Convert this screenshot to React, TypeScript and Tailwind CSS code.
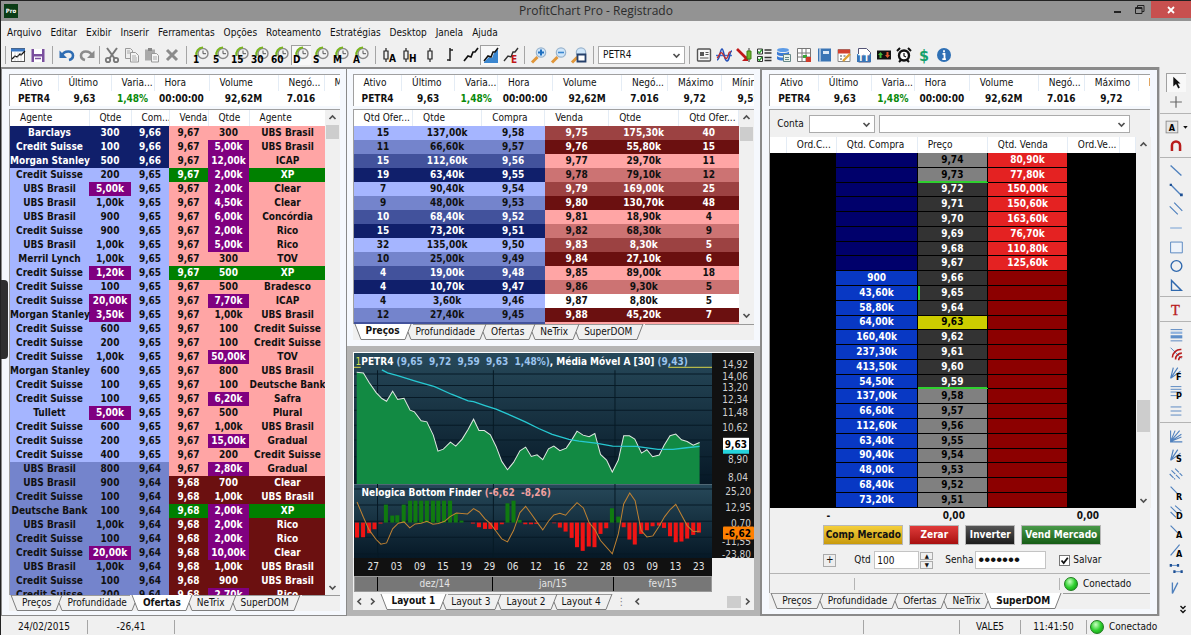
import type { ReactNode } from "react";
import { clsx } from "clsx";

const menuItems = ["Arquivo", "Editar", "Exibir", "Inserir", "Ferramentas", "Opções", "Roteamento", "Estratégias", "Desktop", "Janela", "Ajuda"];

const panelTabs = ["Preços", "Profundidade", "Ofertas", "NeTrix", "SuperDOM"];

const quote = [
    { label: "Ativo", value: "PETR4", width: "w-12" },
    { label: "Último", value: "9,63", width: "w-[53px]" },
    { label: "Varia...", value: "1,48%", width: "w-[43px]" },
    { label: "Hora", value: "00:00:00", width: "w-[55px]" },
    { label: "Volume", value: "92,62M", width: "w-[69px]" },
    { label: "Negó...", value: "7.016", width: "w-[46px]" },
    { label: "Máximo", value: "9,72", width: "w-[54px]" },
    { label: "Mínimo", value: "9,59", width: "w-[54px]" },
];

// buyer, qty, bid, ask, qty, seller
const offers = [
    ["Barclays", "300", "9,66", "9,67", "300", "UBS Brasil"],
    ["Credit Suisse", "100", "9,66", "9,67", "5,00k", "UBS Brasil"],
    ["Morgan Stanley", "500", "9,66", "9,67", "12,00k", "ICAP"],
    ["Credit Suisse", "200", "9,65", "9,67", "2,00k", "XP"],
    ["UBS Brasil", "5,00k", "9,65", "9,67", "2,00k", "Clear"],
    ["UBS Brasil", "1,00k", "9,65", "9,67", "4,50k", "Clear"],
    ["UBS Brasil", "900", "9,65", "9,67", "6,00k", "Concórdia"],
    ["Credit Suisse", "900", "9,65", "9,67", "2,00k", "Rico"],
    ["UBS Brasil", "1,00k", "9,65", "9,67", "5,00k", "Rico"],
    ["Merril Lynch", "1,00k", "9,65", "9,67", "300", "TOV"],
    ["Credit Suisse", "1,20k", "9,65", "9,67", "500", "XP"],
    ["Credit Suisse", "100", "9,65", "9,67", "500", "Bradesco"],
    ["Credit Suisse", "20,00k", "9,65", "9,67", "7,70k", "ICAP"],
    ["Morgan Stanley", "3,50k", "9,65", "9,67", "1,00k", "UBS Brasil"],
    ["Credit Suisse", "600", "9,65", "9,67", "100", "Credit Suisse"],
    ["Credit Suisse", "200", "9,65", "9,67", "100", "Credit Suisse"],
    ["Credit Suisse", "1,00k", "9,65", "9,67", "50,00k", "TOV"],
    ["Morgan Stanley", "600", "9,65", "9,67", "800", "UBS Brasil"],
    ["Credit Suisse", "100", "9,65", "9,67", "100", "Deutsche Bank"],
    ["Credit Suisse", "100", "9,65", "9,67", "6,20k", "Safra"],
    ["Tullett", "5,00k", "9,65", "9,67", "500", "Plural"],
    ["Credit Suisse", "600", "9,65", "9,67", "1,00k", "UBS Brasil"],
    ["Credit Suisse", "200", "9,65", "9,67", "15,00k", "Gradual"],
    ["Credit Suisse", "400", "9,65", "9,67", "200", "Credit Suisse"],
    ["UBS Brasil", "800", "9,64", "9,67", "2,80k", "Gradual"],
    ["UBS Brasil", "900", "9,64", "9,68", "700", "Clear"],
    ["Credit Suisse", "100", "9,64", "9,68", "1,00k", "UBS Brasil"],
    ["Deutsche Bank", "100", "9,64", "9,68", "2,00k", "XP"],
    ["UBS Brasil", "1,00k", "9,64", "9,68", "2,00k", "Rico"],
    ["Credit Suisse", "100", "9,64", "9,68", "2,00k", "Rico"],
    ["Credit Suisse", "20,00k", "9,64", "9,68", "10,00k", "Clear"],
    ["UBS Brasil", "1,00k", "9,64", "9,68", "1,00k", "UBS Brasil"],
    ["Credit Suisse", "100", "9,64", "9,68", "900", "UBS Brasil"],
    ["Credit Suisse", "200", "9,64", "9,68", "2,70k", "Rico"],
];

const prices = [
    ["15", "137,00k", "9,58", "9,75", "175,30k", "40"],
    ["11", "66,60k", "9,57", "9,76", "55,80k", "15"],
    ["15", "112,60k", "9,56", "9,77", "29,70k", "11"],
    ["19", "63,40k", "9,55", "9,78", "79,10k", "12"],
    ["7", "90,40k", "9,54", "9,79", "169,00k", "25"],
    ["9", "48,00k", "9,53", "9,80", "130,70k", "48"],
    ["10", "68,40k", "9,52", "9,81", "18,90k", "4"],
    ["15", "73,20k", "9,51", "9,82", "68,30k", "9"],
    ["32", "135,00k", "9,50", "9,83", "8,30k", "5"],
    ["10", "25,00k", "9,49", "9,84", "27,10k", "6"],
    ["4", "19,00k", "9,48", "9,85", "89,00k", "18"],
    ["4", "10,70k", "9,47", "9,86", "9,30k", "5"],
    ["4", "3,60k", "9,46", "9,87", "8,80k", "5"],
    ["12", "27,40k", "9,45", "9,88", "45,20k", "7"],
    ["", "", "", "", "", ""],
];

const buyShades = ["bg-[#a5b5ff]", "bg-[#7484cc]", "bg-[#42529c] text-white", "bg-[#101f6b] text-white"];
const sellShades = ["bg-[#9c4242] text-white", "bg-[#6b1010] text-white", "bg-[#ffa5a5]", "bg-[#cc7373]"];

// qty bought, price, qty sold
const ladder = [
    ["", "9,74", "80,90k"],
    ["", "9,73", "77,80k"],
    ["", "9,72", "150,00k"],
    ["", "9,71", "150,60k"],
    ["", "9,70", "163,60k"],
    ["", "9,69", "76,70k"],
    ["", "9,68", "110,80k"],
    ["", "9,67", "125,60k"],
    ["900", "9,66", ""],
    ["43,60k", "9,65", ""],
    ["58,80k", "9,64", ""],
    ["64,00k", "9,63", ""],
    ["160,40k", "9,62", ""],
    ["237,30k", "9,61", ""],
    ["413,50k", "9,60", ""],
    ["54,50k", "9,59", ""],
    ["137,00k", "9,58", ""],
    ["66,60k", "9,57", ""],
    ["112,60k", "9,56", ""],
    ["63,40k", "9,55", ""],
    ["90,40k", "9,54", ""],
    ["48,00k", "9,53", ""],
    ["68,40k", "9,52", ""],
    ["73,20k", "9,51", ""],
];

/* ---------- toolbar icons ---------- */

function Icon({ children, size = 20 }: { children: ReactNode; size?: number }) {
    return (
        <svg width={size} height={size} viewBox="0 0 20 20" fill="none" aria-hidden="true">
            {children}
        </svg>
    );
}

function Letter({ x, y, children, fill = "#000", size = 10 }: { x: number; y: number; children: ReactNode; fill?: string; size?: number }) {
    return (
        <text x={x} y={y} fontSize={size} fontWeight="bold" fill={fill}>
            {children}
        </text>
    );
}

function ClockIcon({ label }: { label: string }) {
    return (
        <Icon>
            <circle cx="12" cy="8.5" r="5" fill="#f2f2f2" stroke="#8a8a8a" strokeWidth="1.4" />
            <path d="M5.5 11A6.6 6.6 0 0 1 12 2.6" stroke="#7ab51d" strokeWidth="2" />
            <path d="M12 5.5v3.2h3" stroke="#555" strokeWidth="1" />
            <Letter x={label.length > 1 ? 0 : 2} y={18}>{label}</Letter>
        </Icon>
    );
}

const candle = <path d="M6 3v3M6 14v3M4 6h4v8H4z" stroke="#222" strokeWidth="1.2" />;
const trend = "M4 16l4-5 3 1 2-5 2 0 3-4";

function Magnifier({ children }: { children?: ReactNode }) {
    return (
        <Icon>
            <path d="M3 17.5l5.5-5.5" stroke="#e0963a" strokeWidth="3" />
            <circle cx="12" cy="7.5" r="4.7" fill="#cfe6fa" stroke="#9ab3cc" strokeWidth="1.2" />
            {children}
        </Icon>
    );
}

const toolGroups: { id: string; after?: string; tools: { name: string; icon: ReactNode; on?: boolean }[] }[] = [
    {
        id: "file",
        tools: [
            {
                name: "Novo gráfico",
                icon: (
                    <Icon>
                        <rect x="3.5" y="3.5" width="13" height="13" fill="#fff" stroke="#555" />
                        <path d="M3 5h14" stroke="#3b78c4" strokeWidth="3" />
                        <path d="M4 14l3-3 2 1 3-3 1 1 4-4" stroke="#111" strokeWidth="1.3" />
                        <path d="M7 7v9M10 7v9M13 7v9" stroke="#bbb" strokeWidth=".5" />
                    </Icon>
                ),
            },
            {
                name: "Salvar",
                icon: (
                    <Icon>
                        <path d="M3.5 4h13v13h-13z" fill="#7a4f9e" />
                        <path d="M6 4h8v5H6zM6 11.5h8V17H6z" fill="#fff" />
                        <path d="M7 13.5h6" stroke="#7a4f9e" strokeWidth="1.5" />
                    </Icon>
                ),
            },
        ],
    },
    {
        id: "history",
        after: "w-[5px]",
        tools: [
            { name: "Desfazer", icon: <Icon><path d="M5 10.5C7 5.5 16 5 16 10.5c0 3-2 4-4 4.5" stroke="#2f6db3" strokeWidth="2.6" /><path d="M2.5 5.5v7.5h7.5z" fill="#2f6db3" /></Icon> },
            { name: "Refazer", icon: <Icon><path d="M15 10.5C13 5.5 4 5 4 10.5c0 3 2 4 4 4.5" stroke="#8b8b8b" strokeWidth="2.6" /><path d="M17.5 5.5v7.5h-7.5z" fill="#8b8b8b" /></Icon> },
        ],
    },
    {
        id: "edit",
        tools: [
            { name: "Recortar", icon: <Icon><path d="M5 3l8 11M15 3L7 14" stroke="#777" strokeWidth="2" /><circle cx="6" cy="15" r="2.2" stroke="#777" strokeWidth="1.8" /><circle cx="14" cy="15" r="2.2" stroke="#777" strokeWidth="1.8" /></Icon> },
            { name: "Copiar", icon: <Icon><path d="M3.5 3.5h5l2 2v8h-7z" fill="#eee" stroke="#999" /><path d="M8.5 7.5h5l3 3v6.5h-8z" fill="#f4f4f4" stroke="#999" /><path d="M10 11h4M10 13h5M10 15h5M5 6h3M5 8h3" stroke="#aaa" /></Icon> },
            { name: "Colar", icon: <Icon><path d="M3 4.5h10v11H3z" fill="#aaa" /><path d="M6 3h4v3H6z" fill="#888" /><path d="M9.5 8.5h5l2 2v6.5h-7z" fill="#f4f4f4" stroke="#999" /><path d="M11 12h4M11 14h4" stroke="#aaa" /></Icon> },
            { name: "Excluir", icon: <Icon><path d="M5 5l10 10M15 5L5 15" stroke="#8b8b8b" strokeWidth="3" /></Icon> },
        ],
    },
    {
        id: "period",
        tools: ["1", "5", "15", "30", "60", "D", "S", "M", "A"].map((p) => ({ name: `Período ${p}`, icon: <ClockIcon label={p} />, on: p === "D" })),
    },
    {
        id: "style",
        tools: [
            { name: "Candle ajustado", icon: <Icon>{candle}<Letter x={9} y={17}>A</Letter></Icon> },
            { name: "Candle Heikin", icon: <Icon>{candle}<Letter x={9} y={17}>H</Letter></Icon> },
            { name: "Candle", icon: <Icon><path d="M10 3v3M10 14v3M8 6h4v8H8z" stroke="#222" strokeWidth="1.2" /></Icon> },
            { name: "Barra", icon: <Icon><path d="M10 3v13M10 5h3M7 15h3" stroke="#222" strokeWidth="1.5" /></Icon> },
            { name: "Linha", icon: <Icon><path d={trend} stroke="#111" strokeWidth="1.7" /></Icon> },
            { name: "Área", on: true, icon: <Icon><path d="M4 17l5-5 3 1 2-5 4-4v14H4z" fill="#3b87d0" /><path d={trend} stroke="#111" strokeWidth="1.5" /></Icon> },
            { name: "Linha E", icon: <Icon><path d={trend} stroke="#333" strokeWidth="1.4" /><Letter x={11} y={18} fill="#c01818">E</Letter></Icon> },
        ],
    },
    {
        id: "zoom",
        tools: [
            { name: "Ampliar", icon: <Magnifier><path d="M12 4.5v6M9 7.5h6" stroke="#1f6fc0" strokeWidth="2" /></Magnifier> },
            { name: "Reduzir", icon: <Magnifier><path d="M9 7.5h6" stroke="#3b87d0" strokeWidth="1.6" /></Magnifier> },
            { name: "Zoom da área", icon: <Magnifier><path d="M8.5 9.5h8v7h-8z" fill="#fff" stroke="#26406b" strokeWidth="1.8" /></Magnifier> },
        ],
    },
];

const windowTools: { name: string; icon: ReactNode }[] = [
    { name: "Notícias", icon: <Icon><rect x="3.5" y="4" width="13" height="12" rx="1" fill="#f6f6f6" stroke="#555" strokeWidth="1.4" /><path d="M6 7h4v4H6z" fill="#555" /><path d="M11.5 7.5h3M11.5 9.5h3M6 13h8.5" stroke="#555" /></Icon> },
    { name: "Indicadores", icon: <Icon><path d="M2 10.5h16" stroke="#3b6fd0" strokeWidth="1.4" /><path d="M3 15c3 0 3-11 5-11s2 12 5 12 2-10 5-10" stroke="#2450b8" strokeWidth="1.6" /><path d="M3 13c2-1 3-7 5-5s3 7 5 5 1-7 4-6" stroke="#c02d2d" strokeWidth="1.3" /></Icon> },
    { name: "Execução", icon: <Icon><path d="M3 4l9 9" stroke="#c01818" strokeWidth="2.6" /><path d="M14 10v6H8z" fill="#c01818" /><path d="M15 3v14" stroke="#333" /><path d="M13 6h4v8h-4z" fill="#6cb52d" stroke="#3d7d12" /></Icon> },
    { name: "Regras", icon: <Icon><path d="M3.5 4h5v5h-5zM3.5 11.5h5v5h-5z" fill="#fff" stroke="#333" /><path d="M4 6.5l1.5 1.5L8 4.5M4 14l1.5 1.5L8 12" stroke="#2c9a2c" strokeWidth="1.4" /><path d="M10.5 5h7M10.5 8h7M10.5 12.5h7M10.5 15.5h7" stroke="#333" strokeWidth="1.5" /></Icon> },
    { name: "Banco de dados", icon: <Icon><ellipse cx="9" cy="5" rx="6" ry="2" fill="#5d9be6" /><path d="M3 6.5c2 2 10 2 12 0v3c-2 2-10 2-12 0zM3 11c2 2 10 2 12 0v3c-2 2-10 2-12 0z" fill="#3a7bd5" /><path d="M9.5 9.5h7v7h-7z" fill="#eaf2ea" stroke="#688" /><path d="M11 12.5h4M11 14.5h4" stroke="#688" /></Icon> },
    { name: "Grade", icon: <Icon><path d="M3.5 3.5h13v13h-13zM8 3.5v13M12 3.5v13M3.5 8h13M3.5 12h13" fill="#fff" stroke="#777" /><path d="M9 10h4v3H9z" fill="#3aa53a" /><path d="M12 12h5v5h-5z" fill="#d13b2a" /></Icon> },
    { name: "Diário", icon: <Icon><path d="M4 3.5h13v13H4z" fill="#3a75b5" /><path d="M6 3.5v13" stroke="#fff" /><path d="M9 6h6v3H9z" fill="#dbe8f5" /></Icon> },
    { name: "Calendário", icon: <Icon><path d="M4 4.5h12v12H4z" fill="#fff" stroke="#888" /><path d="M4 4.5h12v4H4z" fill="#d2402e" /><path d="M6 11h2M9.5 11h2M6 14h2" stroke="#888" strokeWidth="1.5" /><path d="M9 16l7-7" stroke="#e0a030" strokeWidth="2.4" /></Icon> },
    { name: "Times and trades", icon: <Icon><path d="M4.5 3.5h8l4 4v9.5h-12z" fill="#fff" stroke="#557" /><path d="M3 9h14v8H3z" fill="#3a75b5" /><text x="4" y="16" fontSize="9" fontWeight="bold" fill="#fff">TT</text></Icon> },
    { name: "Boleta", icon: <Icon><path d="M3 5.5h14v9H3z" fill="#111" /><path d="M6.5 7L9 10H7.5v3h-2v-3H4z" fill="#46b83a" /><path d="M13.5 13L11 10h1.5V7h2v3H16z" fill="#e2582c" /></Icon> },
    { name: "Alarme", icon: <Icon><circle cx="10" cy="10.5" r="5" fill="#fff" stroke="#111" strokeWidth="2.4" /><path d="M3 6l3-3M17 6l-3-3M5 17l2-2M15 17l-2-2" stroke="#111" strokeWidth="2" /><path d="M10 8v3l2 1" stroke="#111" strokeWidth="1.2" /></Icon> },
    { name: "Financeiro", icon: <Icon><text x="5" y="16" fontSize="16" fontWeight="bold" fill="#15a06a">$</text></Icon> },
    { name: "Informações", icon: <Icon><circle cx="10" cy="10" r="7" fill="#2f70b5" /><path d="M10 5.2v2M8.5 8.8h2v5.2M8.3 14.2h3.6" stroke="#fff" strokeWidth="1.8" /></Icon> },
];

const B = "#4f80bd";
const drawingTools: { name: string; icon: ReactNode; on?: boolean; drop?: boolean }[][] = [
    [
        { name: "Selecionar", on: true, icon: <path d="M7 3v11l3-3 2.5 5 1.8-1-2.4-4.5H15z" fill="#111" /> },
        { name: "Cruz", icon: <path d="M10 3.5v13M3.5 10h13" stroke="#666" strokeWidth="1.3" /> },
    ],
    [
        { name: "Texto ativo", drop: true, icon: <><rect x="-1" y="3.5" width="13" height="13" fill="#e6e6e6" stroke="#8c8c8c" /><Letter x={2} y={14}>A</Letter></> },
        { name: "Ímã", icon: <path d="M5.5 15.5V9.5a4.5 4.5 0 0 1 9 0v6" stroke="#b81c1c" strokeWidth="2.8" /> },
    ],
    [
        { name: "Reta", icon: <path d="M4 4l12 11" stroke={B} strokeWidth="1.5" /> },
        { name: "Segmento", icon: <><path d="M4 4l12 12" stroke={B} strokeWidth="1.5" /><path d="M3 3h2.5v2.5H3zM14.5 14h3v3h-3z" fill="#1d4f93" /></> },
        { name: "Paralelas", icon: <path d="M8 3l9 9M3 7l9 9" stroke={B} strokeWidth="1.3" /> },
        { name: "Horizontal", icon: <path d="M3.5 10h13" stroke="#7ea6d6" strokeWidth="1.2" /> },
        { name: "Retângulo", icon: <path d="M4 4.5h13v12H4z" stroke={B} fill="#eef3fa" /> },
        { name: "Elipse", icon: <circle cx="10.5" cy="10" r="6" stroke="#2f68ad" strokeWidth="1.5" /> },
        { name: "Triângulo", icon: <path d="M5 5v11h11z" stroke="#2f68ad" strokeWidth="1.5" /> },
    ],
    [{ name: "Texto", icon: <text x="4.5" y="16" fontSize="16" fontFamily="Liberation Serif" fill="#b81c1c" stroke="#b81c1c" strokeWidth=".4">T</text> }],
    [
        { name: "Retrações", icon: <><path d="M4 4h13M4 16.5h13" stroke={B} /><path d="M4 7.5h13" stroke="#8fb2dd" strokeWidth="2.5" /><path d="M4 12h13" stroke="#5f8fc9" strokeWidth="3.5" /></> },
        { name: "Arcos", icon: <><path d="M4 3l12 12" stroke={B} /><path d="M6 14a9 9 0 0 1 10-9M9.5 16a7 7 0 0 1 7-7M13 17c0-3 1-4 4-4" stroke="#b81c1c" strokeWidth="1.8" /></> },
        { name: "Leque Fibonacci", icon: <><path d="M4 16L7 4M4 16l8-12M4 16l11-8" stroke={B} strokeWidth="1.3" /><Letter x={10} y={18}>F</Letter></> },
        { name: "Projeção", icon: <><path d="M4 4h12M4 7h12M4 10h12M4 14h7" stroke={B} /><Letter x={10} y={18}>P</Letter></> },
        { name: "Canal", icon: <path d="M4 5.5h12M4 10h12M4 14.5h12" stroke={B} /> },
    ],
    [
        { name: "Leque", icon: <path d="M4 4v12.5h13M4 16L9 4M4 16L14 4M4 16l12-8M4 16l12-5" stroke={B} strokeWidth="1.2" /> },
        { name: "Leque S", icon: <><path d="M4 16L7 4M4 16l8-12M4 16l11-8" stroke={B} strokeWidth="1.3" /><Letter x={10} y={18}>S</Letter></> },
        { name: "Linhas paralelas", icon: <path d="M9 4l8 8M5 6l10 10M3 10l6 6" stroke={B} strokeWidth="1.2" strokeDasharray="6 1" /> },
        { name: "Regressão", icon: <><path d="M4 3l9 9" stroke={B} strokeWidth="1.3" /><Letter x={10} y={18}>R</Letter></> },
        { name: "Desvio", icon: <><path d="M9 3l7 6M4 4l9 9M4 10l6 6" stroke={B} strokeWidth="1.2" /><Letter x={10} y={18}>D</Letter></> },
        { name: "Linha A", icon: <><path d="M4 4l8 8" stroke={B} strokeWidth="1.3" /><Letter x={10} y={18}>A</Letter></> },
        { name: "Linha ascendente", icon: <><path d="M4 16L14 4" stroke={B} strokeWidth="1.3" /><Letter x={10} y={18}>A</Letter></> },
        { name: "Intervalo", icon: <><path d="M4 6h8M8 13h8" stroke={B} /><path d="M3 4.5h2.5v3H3zM11 4.5h2.5v3H11zM7 11.5h2.5v3H7zM15 11.5h2.5v3H15z" fill="#1d4f93" /></> },
        { name: "Vértice", icon: <path d="M6 4v12l6-12" stroke={B} strokeWidth="1.5" /> },
    ],
];

/* ---------- shared pieces ---------- */

function Separator({ width = "w-[9px]" }: { width?: string }) {
    return (
        <span className={clsx("flex h-[18px] shrink-0 justify-center", width)}>
            <span className="w-px bg-[#a5a5a5]" />
        </span>
    );
}

function ToolButton({ name, icon, on }: { name: string; icon: ReactNode; on?: boolean }) {
    return (
        <button type="button" aria-label={name} className={clsx("flex size-5 shrink-0 items-center justify-center", on && "bg-[#f8f8f8] shadow-[inset_1px_1px_0_#a0a0a0]")}>
            {icon}
        </button>
    );
}

function Chevron({ d, className }: { d: string; className?: string }) {
    return (
        <svg width="9" height="9" viewBox="0 0 9 9" fill="none" stroke="#505050" strokeWidth="1.7" className={className} aria-hidden="true">
            <path d={d} />
        </svg>
    );
}

const UP = "M1.5 6L4.5 3L7.5 6";
const DOWN = "M1.5 3L4.5 6L7.5 3";
const LEFT = "M6 1.5L3 4.5L6 7.5";
const RIGHT = "M3 1.5L6 4.5L3 7.5";

function ScrollBar({ before, thumb }: { before: string; thumb: string }) {
    return (
        <div className="flex w-[15px] shrink-0 flex-col items-center bg-[#f0f0f0]">
            <div className="flex h-[15px] w-full shrink-0 items-center justify-center"><Chevron d={UP} /></div>
            <div className={before} />
            <div className={clsx("w-[13px] shrink-0 bg-[#cdcdcd]", thumb)} />
            <div className="grow" />
            <div className="flex h-4 items-center"><Chevron d={DOWN} /></div>
        </div>
    );
}

type EdgeKind = "first" | "between" | "last";

function TabEdge({ left = false, right = false, kind = "between" }: { left?: boolean; right?: boolean; kind?: EdgeKind }) {
    const opening = kind === "first" || right;
    return (
        <svg width="10" height="16" viewBox="0 0 10 16" fill="none" stroke="#7d7d7d" className="shrink-0" aria-hidden="true">
            {left && <path d="M0 0H8L2 15.5H0z" fill="#fff" stroke="none" />}
            {right && <path d="M10 0H2L8 15.5H10z" fill="#fff" stroke="none" />}
            {!left && !right && <path d={kind === "first" ? "M2 .5H10" : kind === "last" ? "M0 .5H8" : "M0 .5H10"} stroke="#9a9a9a" />}
            {opening ? <path d="M2 0L8 15.5H10" /> : <path d="M8 0L2 15.5H0" />}
            {kind === "between" && (opening ? <path d="M5 8L2 15.5H0" /> : <path d="M5 8L8 15.5H10" />)}
        </svg>
    );
}

function Tabs({ items, active }: { items: string[]; active: string }) {
    return (
        <div role="tablist" className="flex h-4 shrink-0">
            <TabEdge right={items[0] === active} kind="first" />
            {items.map((item, i) => (
                <div key={item} className="flex">
                    <button
                        type="button"
                        role="tab"
                        aria-selected={item === active}
                        className={clsx("h-4 border-b border-[#7d7d7d] px-[3px] leading-[14px]", item === active ? "bg-white font-bold" : "border-t border-t-[#9a9a9a]")}
                    >
                        {item}
                    </button>
                    <TabEdge left={item === active} right={items[i + 1] === active} kind={i === items.length - 1 ? "last" : "between"} />
                </div>
            ))}
            <div className="grow border-t border-[#9a9a9a]" />
        </div>
    );
}

function QuoteStrip() {
    return (
        <div className="shrink-0 overflow-hidden border-t border-l border-[#a0a0a0] bg-white">
            <table className="w-[422px] table-fixed">
                <thead>
                    <tr>
                        {quote.map((q) => (
                            <th key={q.label} className={clsx("h-4 overflow-hidden border-r border-[#e4ecf5] p-0 pl-[10px] text-left font-normal whitespace-nowrap", q.width)}>
                                {q.label}
                            </th>
                        ))}
                    </tr>
                </thead>
                <tbody>
                    <tr>
                        {quote.map((q) => (
                            <td key={q.label} className={clsx("h-[15px] p-0 text-center font-bold", q.label === "Varia..." && "text-[#0a8a0a]")}>
                                {q.value}
                            </td>
                        ))}
                    </tr>
                </tbody>
            </table>
        </div>
    );
}

function HeadRow({ labels }: { labels: string[] }) {
    return (
        <thead>
            <tr className="bg-white">
                {labels.map((label, i) => (
                    <th key={i} className="h-4 overflow-hidden border-r border-[#e4ecf5] p-0 pl-[10px] text-left font-normal whitespace-nowrap">
                        {label}
                    </th>
                ))}
            </tr>
        </thead>
    );
}

function Cols({ widths }: { widths: string[] }) {
    return (
        <colgroup>
            {widths.map((w, i) => <col key={i} className={w} />)}
        </colgroup>
    );
}

function Connected() {
    return (
        <span className="flex items-center gap-[5px]">
            <span className="size-[14px] rounded-full border border-[#1d7a1d] bg-radial-[at_40%_30%] from-[#c8ffc0] via-[#2fd02f] to-[#0d8a0d]" />
            Conectado
        </span>
    );
}

/* ---------- panels ---------- */

function buyShade(price: string) {
    if (price === "9,66") return "bg-[#101f6b] text-white";
    if (price === "9,65") return "bg-[#a5b5ff]";
    return "bg-[#7484cc]";
}

function sellShade(price: string, agent: string) {
    if (agent === "XP") return "bg-[#008000] text-white";
    if (price === "9,67") return "bg-[#ffa5a5]";
    return "bg-[#6b1010] text-white";
}

function qtyShade(qty: string) {
    return qty.endsWith("k") && qty !== "1,00k" ? "bg-[#800080] text-white" : "";
}

function OffersPanel() {
    return (
        <section className="flex min-h-0 min-w-0 flex-col border border-[#8a8a8a] bg-[#f5f8fd] pt-[5px] pr-[6px] pb-1 pl-[7px]">
            <QuoteStrip />
            <div className="mt-[3px] flex min-h-0 flex-1 overflow-hidden border-t border-l border-[#a0a0a0]">
                <div className="h-0 min-h-full flex-1 overflow-hidden">
                    <table className="w-full table-fixed">
                        <Cols widths={["w-[79px]", "w-[42px]", "w-[38px]", "w-[39px]", "w-[41px]", "w-[77px]"]} />
                        <HeadRow labels={["Agente", "Qtde", "Com...", "Venda", "Qtde", "Agente"]} />
                        <tbody className="text-center leading-[14px] font-bold whitespace-nowrap">
                            {offers.map(([buyer, buyQty, bid, ask, sellQty, seller], i) => (
                                <tr key={i}>
                                    <td className={clsx("p-0", buyShade(bid))}>{buyer}</td>
                                    <td className={clsx("p-0", qtyShade(buyQty) || buyShade(bid))}>{buyQty}</td>
                                    <td className={clsx("p-0", buyShade(bid))}>{bid}</td>
                                    <td className={clsx("p-0", sellShade(ask, seller))}>{ask}</td>
                                    <td className={clsx("p-0", qtyShade(sellQty) || sellShade(ask, seller))}>{sellQty}</td>
                                    <td className={clsx("p-0", sellShade(ask, seller))}>{seller}</td>
                                </tr>
                            ))}
                        </tbody>
                    </table>
                </div>
                <ScrollBar before="h-0" thumb="h-[14px]" />
            </div>
            <div className="bg-[#f0f0f0]">
                <Tabs items={panelTabs} active="Ofertas" />
            </div>
        </section>
    );
}

function PricesPanel() {
    return (
        <section className="flex min-h-0 min-w-0 flex-col border-t border-[#8a8a8a] bg-[#f5f8fd] px-[6px] pt-[5px] pb-[6px]">
            <QuoteStrip />
            <div className="mt-[3px] flex min-h-0 flex-1 overflow-hidden border-t border-l border-[#a0a0a0]">
                <div className="h-0 min-h-full flex-1 overflow-hidden">
                    <table className="w-full table-fixed">
                        <Cols widths={["w-[59px]", "w-[69px]", "w-[63px]", "w-[64px]", "w-[70px]", "w-[60px]"]} />
                        <HeadRow labels={["Qtd Ofer...", "Qtde", "Compra", "Venda", "Qtde", "Qtd Ofer..."]} />
                        <tbody className="text-center leading-[14px] font-bold">
                            {prices.map((row, i) => (
                                <tr key={i}>
                                    {row.map((cell, c) => (
                                        <td key={c} className={clsx("h-[14px] p-0", c < 3 ? buyShades[i % 4] : row[3] === "9,87" ? "bg-white" : sellShades[i % 4])}>
                                            {cell}
                                        </td>
                                    ))}
                                </tr>
                            ))}
                        </tbody>
                    </table>
                </div>
                <ScrollBar before="h-[2px]" thumb="h-[14px]" />
            </div>
            <div className="bg-[#f0f0f0]">
                <Tabs items={panelTabs} active="Preços" />
            </div>
        </section>
    );
}

const priceLine =
    "38,94 58,96 75,125 96,155 113,173 127,181 145,151 160,176 179,172 197,208 210,213 230,240 247,243 266,283 280,331 296,325 317,304 333,316 352,295 370,265 386,235 402,269 418,269 436,282 453,317 470,362 487,387 505,365 524,330 541,319 558,347 575,342 592,357 609,324 625,316 643,330 662,322 678,298 694,271 712,283 730,288 747,278 764,341 782,358 799,394 817,358 833,285 850,285 866,295 886,337 902,327 919,348 939,343 953,314 971,285 988,280 1005,297 1022,302 1040,313 1059,305";
const averageLine =
    "113,87 130,96 160,104 215,121 270,137 320,160 370,180 386,182 420,194 453,205 500,225 540,243 580,263 620,281 670,296 700,301 750,307 800,316 870,317 935,326 980,326 1020,321 1059,317";
const finderLine =
    "39,484 58,530 75,568 96,597 110,611 127,607 145,565 162,548 179,544 196,562 212,550 230,548 247,542 265,551 281,549 300,542 316,528 335,517 368,520 386,504 403,514 420,535 437,550 453,572 470,595 487,604 505,570 524,516 541,497 558,520 576,546 592,568 609,542 625,523 643,518 660,524 678,503 694,486 713,502 730,546 747,567 764,600 799,640 817,580 833,490 851,457 867,480 885,570 902,589 920,586 938,558 955,528 972,506 988,491 1005,523 1022,555 1040,573 1059,572";

// [x, end of the bar]; zero sits at ZERO
const ZERO = 546;
const finderBars = [
    [39, 591], [57, 590], [75, 578], [91, 566], [109, 549], [125, 492], [144, 525], [159, 524], [178, 492], [197, 480], [213, 480], [230, 480],
    [247, 480], [265, 480], [281, 480], [298, 480], [316, 480], [333, 518], [350, 540], [384, 549], [402, 560], [420, 565], [436, 565], [453, 568],
    [470, 551], [487, 488], [505, 480], [523, 538], [540, 551], [557, 551], [573, 550], [626, 548], [643, 561], [660, 573], [678, 592], [694, 620],
    [711, 631], [729, 618], [746, 620], [764, 580], [781, 563], [798, 503], [817, 528], [833, 560], [850, 597], [866, 612], [885, 580], [902, 569],
    [919, 557], [938, 555], [953, 562], [971, 587], [988, 605], [1005, 603], [1022, 594], [1040, 583], [1057, 576],
];

const upperScale: [string, number][] = [["14,92", 11], ["14,06", 23], ["13,20", 34], ["12,34", 46], ["11,48", 59], ["10,62", 74], ["8,90", 106], ["8,04", 124]];
const lowerScale: [string, number][] = [["25,20", 138], ["12,95", 154], ["0,70", 170], ["-11,55", 188], ["-23,80", 202]];

function ChartPlot() {
    return (
        <svg className="h-full w-full" viewBox="30 36 1068 618" preserveAspectRatio="none" fill="none" aria-hidden="true">
            <defs>
                <linearGradient id="plot" x1="0" y1="0" x2="0" y2="1">
                    <stop offset="0" stopColor="#27495a" />
                    <stop offset="1" stopColor="#061826" />
                </linearGradient>
            </defs>
            <rect x="30" y="36" width="1068" height="395" fill="url(#plot)" />
            <rect x="30" y="431" width="1068" height="223" fill="url(#plot)" />
            <g stroke="#071a26" strokeWidth="3">
                {[99, 134, 170, 208, 253, 298, 348, 402, 445, 493, 542, 590, 640].map((y) => <path key={y} d={`M30 ${y}H1098`} />)}
                {[100, 445, 807].map((x) => <path key={x} d={`M${x} 88V654`} />)}
            </g>
            <path d="M30 79H50M966 79H1096" stroke="#b5b84a" strokeWidth="4" />
            <polygon points={`38,430 ${priceLine} 1059,430`} fill="#128a43" />
            <polyline points={priceLine} stroke="#dfe8e2" strokeWidth="3" />
            <polyline points={averageLine} stroke="#27c9d2" strokeWidth="4" />
            {finderBars.map(([x, end]) => (
                <rect key={x} x={x - 6} y={Math.min(end, ZERO)} width="12" height={Math.abs(end - ZERO)} fill={end < ZERO ? "#107a10" : "#f01414"} />
            ))}
            <polyline points={finderLine} stroke="#c08232" strokeWidth="3" />
        </svg>
    );
}

function ChartScale() {
    return (
        <svg className="h-full w-[42px] shrink-0 bg-[#111]" viewBox="0 0 42 206" preserveAspectRatio="none" fill="#d0d0d0" fontSize="10" textAnchor="end">
            {upperScale.map(([label, y]) => <text key={label} x="36" y={y + 4}>{label}</text>)}
            {lowerScale.map(([label, y]) => <text key={label} x="39" y={y + 4}>{label}</text>)}
            <rect x="11" y="90" width="26" height="11" fill="#25d3dc" />
            <rect x="11" y="85" width="26" height="12" fill="#fff" />
            <text x="35" y="95" fill="#000" fontWeight="bold">9,63</text>
            <rect x="11" y="174" width="31" height="13" rx="1" fill="#ff7f00" />
            <text x="39" y="184" fill="#000" fontWeight="bold">-6,62</text>
        </svg>
    );
}

function ChartPanel() {
    const days = ["27", "03", "09", "15", "19", "29", "06", "12", "16", "22", "28", "03", "09", "13", "23"];
    return (
        <section className="flex min-h-0 min-w-0 flex-col border-[6px] border-[#b4b4b4] bg-[#f0f0f0]">
            <div className="flex min-h-0 flex-1 border-t border-l border-white">
                <div className="relative h-full min-w-0 flex-1">
                    <div className="absolute inset-0"><ChartPlot /></div>
                    <p className="absolute top-[2px] left-[2px] text-[10px] leading-[14px] font-bold whitespace-pre text-white">
                        <span className="font-normal text-[#d8e04a]">1</span>
                        <span>PETR4 </span>
                        <span className="text-[#9cc4ee]">(9,65  9,72  9,59  9,63  1,48%)</span>, Média Móvel A [30] <span className="text-[#9cc4ee]">(9,43)</span>
                    </p>
                    <p className="absolute top-[133px] left-2 text-[10px] leading-[14px] font-bold whitespace-pre text-white">
                        Nelogica Bottom Finder <span className="text-[#f0a0a0]">(-6,62  -8,26)</span>
                    </p>
                </div>
                <ChartScale />
            </div>
            <div className="mr-[42px] ml-px bg-[#111] text-center text-[#e4e4e4]">
                <div className="grid h-[18px] grid-cols-15 items-center pr-[2px] pl-2">
                    {days.map((day, i) => <span key={i}>{day}</span>)}
                </div>
                <div className="grid h-4 grid-cols-[23fr_115fr_121fr_97fr] border border-[#999] leading-[14px]">
                    <span className="border-r border-black bg-[#777]" />
                    <span className="border-r border-black bg-[#777]">dez/14</span>
                    <span className="border-r border-black bg-[#777]">jan/15</span>
                    <span className="bg-[#777]">fev/15</span>
                </div>
            </div>
            <div className="flex h-[18px] shrink-0 items-center pt-[1px]">
                <button type="button" aria-label="Layout anterior" className="px-[2px]"><Chevron d={LEFT} /></button>
                <button type="button" aria-label="Próximo layout" className="px-[2px]"><Chevron d={RIGHT} /></button>
                <Tabs items={["Layout 1", "Layout 3", "Layout 2", "Layout 4"]} active="Layout 1" />
                <span className="px-[3px] text-[#777]">⋮</span>
                <Chevron d={LEFT} className="ml-1" />
                <span className="grow" />
                <span className="h-3 w-[14px] bg-[#cdcdcd]" />
                <Chevron d={RIGHT} className="mr-[2px] ml-[2px]" />
            </div>
        </section>
    );
}

function LadderRow({ row }: { row: string[] }) {
    const [bought, price, sold] = row;
    const mid = price >= "9,59" && price <= "9,72";
    const edge = price === "9,73" || price === "9,59";
    return (
        <tr>
            <td className="p-0" />
            <td className="p-0" />
            <td className={clsx("border-b border-black p-0", bought ? "bg-[#0838c4]" : "bg-[#00006b]")}>{bought}</td>
            <td
                className={clsx(
                    "border-x border-b border-x-black p-0",
                    price === "9,63" ? "bg-[#cdcd00] text-black" : mid ? "bg-[#333]" : "bg-[#808080] text-black",
                    edge ? "border-b-[#2fd02f] shadow-[inset_0_-1px_0_#2fd02f]" : "border-b-black",
                    price === "9,65" && "shadow-[inset_2px_0_0_#2fd02f]",
                )}
            >
                {price}
            </td>
            <td className={clsx("border-b border-black p-0", sold ? "bg-[#e42222]" : "bg-[#8c0000]")}>{sold}</td>
            <td className="p-0" />
            <td className="p-0" />
        </tr>
    );
}

function Dropdown({ label, value, className }: { label: string; value?: string; className: string }) {
    return (
        <span className={clsx("relative flex", className)}>
            <select aria-label={label} className="h-[18px] w-full appearance-none border border-[#ababab] bg-white pl-1 text-[10px]">
                <option>{value}</option>
            </select>
            <Chevron d={DOWN} className="pointer-events-none absolute top-[5px] right-1" />
        </span>
    );
}

function DomPanel() {
    const action = "h-5 border border-[#b8b8b8] font-bold whitespace-nowrap";
    return (
        <section className="flex min-h-0 min-w-0 flex-col border-2 border-[#8a8a8a] bg-[#f5f8fd] px-[7px] pt-1 pb-[5px]">
            <QuoteStrip />
            <div className="mt-[3px] flex min-h-0 flex-1 flex-col border-t border-l border-[#a0a0a0] bg-[#f0f0f0]">
                <div className="flex h-[27px] shrink-0 items-center gap-1 pr-5 pl-[7px]">
                    <span className="w-7">Conta</span>
                    <Dropdown label="Conta" className="w-[66px]" />
                    <Dropdown label="Titular" className="flex-1" />
                </div>
                <div className="flex min-h-0 flex-1">
                    <table className="h-full w-full table-fixed bg-black">
                        <Cols widths={["w-4", "w-[50px]", "w-[81px]", "w-[70px]", "w-[80px]", "w-[52px]", "w-4"]} />
                        <HeadRow labels={["", "Ord.C...", "Qtd. Compra", "Preço", "Qtd. Venda", "Ord.Ve...", ""]} />
                        <tbody className="text-center leading-[12px] font-bold text-white">
                            {ladder.map((row) => <LadderRow key={row[1]} row={row} />)}
                        </tbody>
                    </table>
                    <ScrollBar before="h-[248px]" thumb="h-8" />
                </div>
                <div className="flex h-4 shrink-0 items-center font-bold">
                    <span className="w-[60px] text-right">-</span>
                    <span className="ml-[60px] w-[127px] text-center">0,00</span>
                    <span className="grow pr-[51px] text-right">0,00</span>
                </div>
                <form className="flex shrink-0 flex-col gap-[6px] pt-[1px] pb-1 pl-[53px]">
                    <div className="flex gap-[6px]">
                        <button type="button" className={clsx(action, "w-20 bg-linear-to-b from-[#f5cf3a] to-[#c99a0a]")}>Comp Mercado</button>
                        <button type="button" className={clsx(action, "w-[50px] bg-linear-to-b from-[#e03a3a] to-[#a80d0d] text-white")}>Zerar</button>
                        <button type="button" className={clsx(action, "w-[50px] bg-linear-to-b from-[#555] to-[#1c1c1c] text-white")}>Inverter</button>
                        <button type="button" className={clsx(action, "w-20 bg-linear-to-b from-[#4a9a4a] to-[#145c14] text-white")}>Vend Mercado</button>
                    </div>
                    <div className="flex h-[18px] items-center">
                        <button type="button" className="flex size-[13px] items-center justify-center border border-[#ababab] bg-[#eee] leading-none">+</button>
                        <label htmlFor="qtd" className="ml-[18px] w-[20px]">Qtd</label>
                        <input id="qtd" defaultValue="100" className="h-[18px] w-[45px] border border-[#c4c4c4] bg-white pl-[2px]" />
                        <span className="ml-px flex flex-col gap-px">
                            <button type="button" aria-label="Aumentar" className="flex h-2 w-[13px] items-center justify-center border border-[#ababab] text-[6px]">▲</button>
                            <button type="button" aria-label="Diminuir" className="flex h-2 w-[13px] items-center justify-center border border-[#ababab] text-[6px]">▼</button>
                        </span>
                        <label htmlFor="senha" className="ml-3 w-[30px]">Senha</label>
                        <input id="senha" type="password" defaultValue="profit1" className="h-[18px] w-[71px] border border-[#c4c4c4] bg-white pl-[2px] font-['Liberation_Sans',sans-serif] text-[17px]" />
                        <label className="ml-[13px] flex items-center gap-[3px]">
                            <span className="relative flex">
                                <input type="checkbox" defaultChecked className="size-[11px] appearance-none border border-[#777] bg-white" />
                                <svg className="pointer-events-none absolute inset-0" width="11" height="11" viewBox="0 0 11 11" fill="none" stroke="#111" strokeWidth="1.8"><path d="M2.5 5.5l2.2 2.5L8.8 2.8" /></svg>
                            </span>
                            Salvar
                        </label>
                    </div>
                </form>
                <div className="flex h-5 shrink-0 items-center border-t border-[#b4b4b4]">
                    <span className="h-3 w-[85px] border-r border-[#b4b4b4]" />
                    <span className="h-3 grow border-r border-[#b4b4b4]" />
                    <span className="w-[90px] pl-1"><Connected /></span>
                </div>
            </div>
            <div className="bg-[#f0f0f0]">
                <Tabs items={panelTabs} active="SuperDOM" />
            </div>
        </section>
    );
}

/* ---------- window ---------- */

function TitleBar() {
    return (
        <header className="relative flex h-[21px] shrink-0 items-center justify-end border-t border-[#222] bg-[#939393]">
            <span className="absolute left-[3px] flex size-[14px] items-center justify-center bg-[#0b3d16] text-[6px] font-bold text-white">Pro</span>
            <h1 className="absolute inset-x-0 text-center font-['Open_Sans','Noto_Sans',sans-serif] text-[12px] text-[#2b2b2b]">ProfitChart Pro - Registrado</h1>
            <div className="relative flex h-full items-start">
                <button type="button" aria-label="Minimizar" className="flex h-[17px] w-[22px] items-end justify-center pb-[5px]"><span className="h-[2px] w-[7px] bg-[#222]" /></button>
                <button type="button" aria-label="Restaurar" className="flex h-[17px] w-[23px] items-center justify-center">
                    <svg width="10" height="9" viewBox="0 0 10 9" fill="none" stroke="#222"><path d="M.5 2.5h6.5v6H.5zM2.5 2.5V.5h6.5v6H7M.5 3.5h6.5" /></svg>
                </button>
                <button type="button" aria-label="Fechar" className="flex h-[17px] w-[40px] items-center justify-center bg-[#c8504f]">
                    <svg width="8" height="8" viewBox="0 0 8 8" stroke="#fff" strokeWidth="1.8"><path d="M1 1l6 6M7 1L1 7" /></svg>
                </button>
            </div>
        </header>
    );
}

function Toolbar() {
    return (
        <div className="flex h-6 shrink-0 items-center pl-[2px]">
            <Separator width="w-[5px]" />
            {toolGroups.map((group) => (
                <div key={group.id} className="flex items-center">
                    {group.tools.map((tool) => <ToolButton key={tool.name} {...tool} />)}
                    <Separator width={group.after} />
                </div>
            ))}
            <Dropdown label="Ativo" value="PETR4" className="w-[87px]" />
            <Separator />
            {windowTools.map((tool) => <ToolButton key={tool.name} {...tool} />)}
        </div>
    );
}

function DrawingBar() {
    return (
        <aside className="relative flex w-8 shrink-0 flex-col items-center border-l border-[#c8c8c8] bg-[#f0f0f0] pt-[6px]">
            {drawingTools.map((group, g) => (
                <div key={g} className={clsx("flex w-full flex-col items-center", g > 0 && "mt-[2px] border-t border-[#b4b4b4] pt-[3px]")}>
                    {group.map((tool) => (
                        <button key={tool.name} type="button" aria-label={tool.name} className={clsx("relative flex h-[19px] w-5 items-center justify-center", tool.on && "bg-[#f8f8f8] shadow-[inset_1px_1px_0_#a0a0a0]")}>
                            <svg width="18" height="18" viewBox="0 0 20 20" fill="none" className="overflow-visible" aria-hidden="true">
                                {tool.icon}
                                {tool.drop && <path d="M18 9h5l-2.5 3z" fill="#111" />}
                            </svg>
                        </button>
                    ))}
                </div>
            ))}
            <svg className="absolute right-1 bottom-[2px]" width="8" height="9" viewBox="0 0 8 9" fill="none" stroke="#111" strokeWidth="1.4" aria-hidden="true"><path d="M1.5 1L4 3.5L6.5 1M1.5 5L4 7.5L6.5 5" /></svg>
        </aside>
    );
}

function StatusBar() {
    const cell = "flex h-[14px] items-center justify-center border-r border-[#a5a5a5]";
    return (
        <footer className="flex h-[19px] shrink-0 items-center pt-[2px]">
            <span className={clsx(cell, "w-[87px]")}>24/02/2015</span>
            <span className={clsx(cell, "w-[87px]")}>-26,41</span>
            <span className={clsx(cell, "grow")} />
            <span className={clsx(cell, "w-24")} />
            <span className={clsx(cell, "w-[61px]")}>VALE5</span>
            <span className={clsx(cell, "w-[66px]")}>11:41:50</span>
            <span className="w-[104px] pl-[3px]"><Connected /></span>
        </footer>
    );
}

export default function App() {
    return (
        <div className="relative flex h-screen flex-col overflow-hidden border-l border-[#222] bg-[#f0f0f0] font-['DejaVu_Sans_Condensed','Noto_Sans',sans-serif] text-[10px] leading-[14px] text-[#111]">
            <TitleBar />
            <nav className="flex h-[22px] shrink-0 items-center gap-[9px] pt-[2px] pl-[6px]">
                {menuItems.map((item) => <a key={item} href="#">{item}</a>)}
            </nav>
            <Toolbar />
            <main className="flex min-h-0 flex-1">
                <div className="grid min-w-0 flex-1 grid-cols-[345fr_413fr_398fr] grid-rows-[minmax(0,1fr)] border-t border-[#8a8a8a]">
                    <OffersPanel />
                    <div className="grid min-h-0 min-w-0 grid-rows-[minmax(0,277fr)_minmax(0,270fr)]">
                        <PricesPanel />
                        <ChartPanel />
                    </div>
                    <DomPanel />
                </div>
                <DrawingBar />
            </main>
            <StatusBar />
            <div className="absolute top-[280px] left-0 h-[79px] w-[7px] rounded-r-sm bg-[#2f2f2f]" />
        </div>
    );
}
